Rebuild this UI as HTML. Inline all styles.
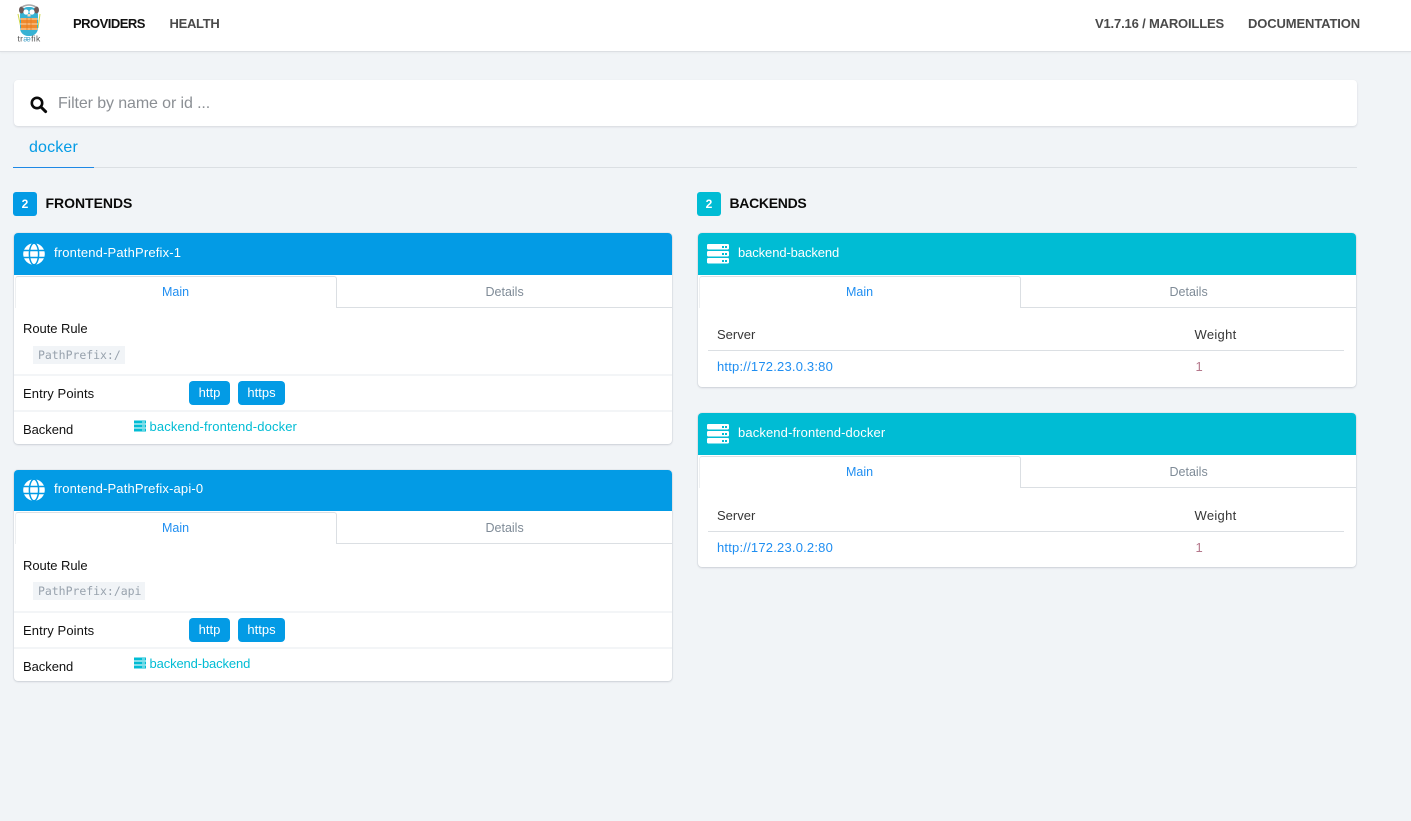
<!DOCTYPE html>
<html><head><meta charset="utf-8"><title>Traefik</title>
<style>
*{box-sizing:border-box}
html,body{margin:0;padding:0;width:1411px;height:821px;overflow:hidden;background:#f1f4f7;font-family:"Liberation Sans",sans-serif;font-size:13px;color:#111}
.a{position:absolute}
.t{position:absolute;white-space:nowrap;line-height:18px;height:18px}
.nav{font-weight:700;font-size:13px;color:#4a4a4a}
.card{position:absolute;background:#fff;border-radius:4px;box-shadow:0 1px 2px rgba(10,20,40,.12),0 0 0 1px rgba(10,20,40,.04)}
.head{position:absolute;left:0;top:0;right:0;height:42px;border-radius:4px 4px 0 0}
.tabline{position:absolute;height:1px;background:#dbdfe3}
.tabact{position:absolute;border:1px solid #dbdfe3;border-left-color:#eef0f2;border-bottom:0;background:#fff;border-radius:3px 3px 0 0}
.sep{position:absolute;left:0;right:0;height:2px;background:#f3f5f7}
.btn{position:absolute;background:#039be5;color:#fff;border-radius:4px;height:24px;line-height:24px;text-align:center;font-size:13px}
.code{position:absolute;background:#f1f4f7;height:18px;line-height:18px;font-family:"DejaVu Sans Mono","Liberation Mono",monospace;font-size:11.5px;color:#98a2ad;padding-left:5px;white-space:nowrap;letter-spacing:-.03px}
.blue{color:#1f8ef1}.grey{color:#7f8b97}.teal{color:#00bcd4}
</style></head>
<body>
<div class="a" style="left:0;top:0;width:1411px;height:52px;background:#fff;border-bottom:1px solid #dcdfe3;box-shadow:0 1px 2px rgba(0,0,0,.04)"></div>

<svg class="a" style="left:15px;top:3px" width="28" height="40" viewBox="0 0 28 40">
<path d="M3 11l3 14M25 11l-2 14" stroke="#cfd84a" stroke-width="1"/>
<rect x="5" y="4" width="18" height="29" rx="8" fill="#37b2d3"/>
<ellipse cx="6.5" cy="7" rx="2.5" ry="3.5" fill="#6e5a58"/><ellipse cx="21.5" cy="7" rx="2.5" ry="3.5" fill="#6e5a58"/>
<path d="M7 4q7-4 14 0" stroke="#a9a9a9" stroke-width="1.5" fill="none"/>
<circle cx="11" cy="9" r="2.6" fill="#fff"/><circle cx="17" cy="9" r="2.6" fill="#fff"/><rect x="12.5" y="11" width="3" height="2.5" fill="#f3d9c0"/>
<rect x="6" y="15" width="16" height="12" fill="#f08a2c"/>
<path d="M5 16h18M5 21h18M5 26h18" stroke="#f6d9b5" stroke-width="1"/><path d="M12 15v12M16 15v12" stroke="#e07a20" stroke-width=".7"/>
<text x="14" y="38.5" text-anchor="middle" font-family="Liberation Sans" font-size="8.5" letter-spacing=".3" fill="#555">tr<tspan fill="#3a9dc6">æ</tspan>fik</text>
</svg>

<div class="t nav" style="left:73px;top:15px;color:#111;letter-spacing:-.52px">PROVIDERS</div>
<div class="t nav" style="left:169.5px;top:15px;letter-spacing:-.3px">HEALTH</div>
<div class="t nav" style="left:1095px;top:15px;letter-spacing:-.17px">V1.7.16 / MAROILLES</div>
<div class="t nav" style="left:1248px;top:15px;letter-spacing:-.12px">DOCUMENTATION</div>

<div class="a" style="left:14px;top:80px;width:1343px;height:46px;background:#fff;border-radius:4px;box-shadow:0 1px 2px rgba(10,20,40,.12)"></div>
<svg class="a" style="left:30px;top:96px" width="18" height="18" viewBox="0 0 18 18"><circle cx="7" cy="7" r="5.2" fill="none" stroke="#0a0a0a" stroke-width="2.6"/><path d="M11 11L15.6 15.6" stroke="#0a0a0a" stroke-width="3" stroke-linecap="round"/></svg>
<div class="t" style="left:58px;top:95px;font-size:16px;color:#8b8f94;letter-spacing:-.11px">Filter by name or id ...</div>

<div class="t" style="left:29px;top:139px;font-size:16px;color:#039be5;letter-spacing:.15px">docker</div>
<div class="a" style="left:13px;top:167px;width:1344px;height:1px;background:#dbdfe3"></div>
<div class="a" style="left:13px;top:167px;width:81px;height:1px;background:#1e88e5"></div>

<div class="a" style="left:13px;top:192px;width:24px;height:24px;background:#039be5;border-radius:3px;color:#fff;font-weight:700;font-size:12px;line-height:24px;text-align:center">2</div>
<div class="t" style="left:45.5px;top:193.5px;font-weight:700;font-size:14px;color:#0a0a0a;letter-spacing:-.03px">FRONTENDS</div>
<div class="a" style="left:697px;top:192px;width:24px;height:24px;background:#00bcd4;border-radius:3px;color:#fff;font-weight:700;font-size:12px;line-height:24px;text-align:center">2</div>
<div class="t" style="left:729.5px;top:193.5px;font-weight:700;font-size:14px;color:#0a0a0a;letter-spacing:-.3px">BACKENDS</div>

<!-- Frontend 1 -->
<div class="card" style="left:14px;top:233px;width:658px;height:211px">
  <div class="head" style="background:#039be5"></div>
  <svg class="a" style="left:9px;top:10px" width="22" height="22" viewBox="0 0 22 22"><circle cx="11" cy="11" r="10.8" fill="#fff"/><g stroke="#039be5" stroke-width="1.5" fill="none"><path d="M0 7.5h22M0 14.5h22"/><ellipse cx="11" cy="11" rx="4.6" ry="10.8"/></g></svg>
  <div class="t" style="left:40px;top:10.5px;color:#fff;letter-spacing:.17px">frontend-PathPrefix-1</div>
  <div class="tabline" style="left:322px;right:0;top:74px"></div>
  <div class="tabact" style="left:1px;top:43px;width:322px;height:32px"></div>
  <div class="t blue" style="left:148px;top:50px;font-size:12.5px">Main</div>
  <div class="t grey" style="left:471.5px;top:50px;font-size:12.5px">Details</div>
  <div class="t" style="left:9px;top:87px;letter-spacing:-.05px">Route Rule</div>
  <div class="code" style="left:19px;top:113px;width:92px">PathPrefix:/</div>
  <div class="sep" style="top:141px"></div>
  <div class="t" style="left:9px;top:152px;letter-spacing:.1px">Entry Points</div>
  <div class="btn" style="left:175px;top:148px;width:41px">http</div>
  <div class="btn" style="left:224px;top:148px;width:47px">https</div>
  <div class="sep" style="top:177px"></div>
  <svg class="a" style="left:120px;top:187px" width="12" height="12" viewBox="0 0 12 12"><path d="M0 .5h12v3H0zM0 4.5h12v3H0zM0 8.5h12v3H0z" fill="#00bcd4"/><path d="M8 2h3M8 6h3M8 10h3" stroke="#fff" stroke-width=".7"/></svg>
  <div class="t teal" style="left:135.5px;top:185px;letter-spacing:.13px">backend-frontend-docker</div>
  <div class="t" style="left:9px;top:188px;letter-spacing:-.05px">Backend</div>
</div>

<!-- Frontend 2 -->
<div class="card" style="left:14px;top:470px;width:658px;height:211px">
  <div class="head" style="background:#039be5;height:41px"></div>
  <svg class="a" style="left:9px;top:9px" width="22" height="22" viewBox="0 0 22 22"><circle cx="11" cy="11" r="10.8" fill="#fff"/><g stroke="#039be5" stroke-width="1.5" fill="none"><path d="M0 7.5h22M0 14.5h22"/><ellipse cx="11" cy="11" rx="4.6" ry="10.8"/></g></svg>
  <div class="t" style="left:40px;top:9.5px;color:#fff;letter-spacing:.16px">frontend-PathPrefix-api-0</div>
  <div class="tabline" style="left:322px;right:0;top:73px"></div>
  <div class="tabact" style="left:1px;top:42px;width:322px;height:32px"></div>
  <div class="t blue" style="left:148px;top:49px;font-size:12.5px">Main</div>
  <div class="t grey" style="left:471.5px;top:49px;font-size:12.5px">Details</div>
  <div class="t" style="left:9px;top:87px;letter-spacing:-.05px">Route Rule</div>
  <div class="code" style="left:19px;top:112px;width:112px">PathPrefix:/api</div>
  <div class="sep" style="top:141px"></div>
  <div class="t" style="left:9px;top:152px;letter-spacing:.1px">Entry Points</div>
  <div class="btn" style="left:175px;top:148px;width:41px">http</div>
  <div class="btn" style="left:224px;top:148px;width:47px">https</div>
  <div class="sep" style="top:177px"></div>
  <svg class="a" style="left:120px;top:187px" width="12" height="12" viewBox="0 0 12 12"><path d="M0 .5h12v3H0zM0 4.5h12v3H0zM0 8.5h12v3H0z" fill="#00bcd4"/><path d="M8 2h3M8 6h3M8 10h3" stroke="#fff" stroke-width=".7"/></svg>
  <div class="t teal" style="left:135.5px;top:185px;letter-spacing:-.13px">backend-backend</div>
  <div class="t" style="left:9px;top:188px;letter-spacing:-.05px">Backend</div>
</div>

<!-- Backend 1 -->
<div class="card" style="left:698px;top:233px;width:658px;height:154px">
  <div class="head" style="background:#00bcd4"></div>
  <svg class="a" style="left:9px;top:11px" width="22" height="20" viewBox="0 0 22 20"><g fill="#fff"><rect y="0" width="22" height="5.5" rx="1.2"/><rect y="7" width="22" height="5.5" rx="1.2"/><rect y="14" width="22" height="5.5" rx="1.2"/></g><g fill="#00bcd4"><rect x="15" y="2" width="2" height="2"/><rect x="18" y="2" width="2" height="2"/><rect x="15" y="9" width="2" height="2"/><rect x="18" y="9" width="2" height="2"/><rect x="15" y="16" width="2" height="2"/><rect x="18" y="16" width="2" height="2"/></g></svg>
  <div class="t" style="left:40px;top:10.5px;color:#fff;letter-spacing:-.1px">backend-backend</div>
  <div class="tabline" style="left:322px;right:0;top:74px"></div>
  <div class="tabact" style="left:1px;top:43px;width:322px;height:32px"></div>
  <div class="t blue" style="left:148px;top:50px;font-size:12.5px">Main</div>
  <div class="t grey" style="left:471.5px;top:50px;font-size:12.5px">Details</div>
  <div class="t" style="left:19px;top:93px;color:#363636;letter-spacing:0">Server</div>
  <div class="t" style="left:496.5px;top:93px;color:#363636;letter-spacing:.3px">Weight</div>
  <div class="a" style="left:10px;right:12px;top:117px;height:1px;background:#dbdfe3"></div>
  <div class="t blue" style="left:19px;top:125px;letter-spacing:.2px">http://172.23.0.3:80</div>
  <div class="t" style="left:497.5px;top:125px;color:#b5788c">1</div>
</div>

<!-- Backend 2 -->
<div class="card" style="left:698px;top:413px;width:658px;height:154px">
  <div class="head" style="background:#00bcd4"></div>
  <svg class="a" style="left:9px;top:11px" width="22" height="20" viewBox="0 0 22 20"><g fill="#fff"><rect y="0" width="22" height="5.5" rx="1.2"/><rect y="7" width="22" height="5.5" rx="1.2"/><rect y="14" width="22" height="5.5" rx="1.2"/></g><g fill="#00bcd4"><rect x="15" y="2" width="2" height="2"/><rect x="18" y="2" width="2" height="2"/><rect x="15" y="9" width="2" height="2"/><rect x="18" y="9" width="2" height="2"/><rect x="15" y="16" width="2" height="2"/><rect x="18" y="16" width="2" height="2"/></g></svg>
  <div class="t" style="left:40px;top:10.5px;color:#fff;letter-spacing:.12px">backend-frontend-docker</div>
  <div class="tabline" style="left:322px;right:0;top:74px"></div>
  <div class="tabact" style="left:1px;top:43px;width:322px;height:32px"></div>
  <div class="t blue" style="left:148px;top:50px;font-size:12.5px">Main</div>
  <div class="t grey" style="left:471.5px;top:50px;font-size:12.5px">Details</div>
  <div class="t" style="left:19px;top:94px;color:#363636;letter-spacing:0">Server</div>
  <div class="t" style="left:496.5px;top:94px;color:#363636;letter-spacing:.3px">Weight</div>
  <div class="a" style="left:10px;right:12px;top:118px;height:1px;background:#dbdfe3"></div>
  <div class="t blue" style="left:19px;top:126px;letter-spacing:.2px">http://172.23.0.2:80</div>
  <div class="t" style="left:497.5px;top:126px;color:#b5788c">1</div>
</div>
</body></html>
